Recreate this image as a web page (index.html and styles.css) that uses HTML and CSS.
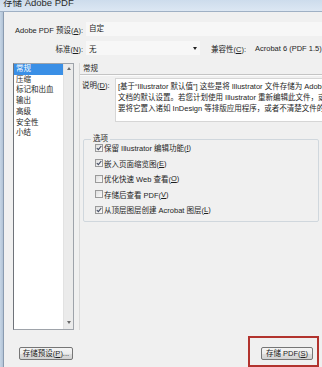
FILE: index.html
```html
<!DOCTYPE html>
<html>

<head>
    <meta charset="UTF-8">
    <title>存储 Adobe PDF</title>
    <link rel="stylesheet" href="styles.css">
</head>

<body>
    <div id="window">
        <div id="titlebar">存储 Adobe PDF</div>
        <div id="frame">
            <div class="frame-edge"></div>
            <div id="dialog">
                <div class="field-row">
                    <span class="field-label">Adobe PDF 预设(<u>A</u>):</span>
                    <span class="field-value">自定</span>
                </div>
                <div class="field-row second">
                    <span class="field-label">标准(<u>N</u>):</span>
                    <span class="combo">无<span class="arrow"></span></span>
                    <span class="compat-label">兼容性(<u>C</u>):</span>
                    <span class="compat-value">Acrobat 6 (PDF 1.5)</span>
                </div>

                <div id="main">
                    <div id="sections">
                        <ul id="sectionList">
                            <li class="selected">常规</li>
                            <li>压缩</li>
                            <li>标记和出血</li>
                            <li>输出</li>
                            <li>高级</li>
                            <li>安全性</li>
                            <li>小结</li>
                        </ul>
                        <div class="scrollbar">
                            <span class="scroll-up"></span>
                            <span class="scroll-down"></span>
                        </div>
                    </div>

                    <div id="panel">
                        <div class="panel-title">常规</div>
                        <div class="desc-row">
                            <span class="desc-label">说明(<u>D</u>):</span>
                            <div class="desc-box">
                                <div>[基于“Illustrator 默认值”] 这些是将 Illustrator 文件存储为 Adobe PDF</div>
                                <div>文档的默认设置。若您计划使用 Illustrator 重新编辑此文件，或者需</div>
                                <div>要将它置入诸如 InDesign 等排版应用程序，或者不清楚文件的最终用途</div>
                            </div>
                        </div>
                        <fieldset id="options">
                            <legend>选项</legend>
                            <div class="check-list">
                                <div class="check"><span class="box"><svg width="6" height="6" viewBox="0 0 6 6"><path d="M0.8 3.1 L2.4 4.7 L5.3 1" /></svg></span>保留 Illustrator 编辑功能(<u>I</u>)</div>
                                <div class="check"><span class="box"><svg width="6" height="6" viewBox="0 0 6 6"><path d="M0.8 3.1 L2.4 4.7 L5.3 1" /></svg></span>嵌入页面缩览图(<u>E</u>)</div>
                                <div class="check"><span class="box"></span>优化快速 Web 查看(<u>O</u>)</div>
                                <div class="check"><span class="box"></span>存储后查看 PDF(<u>V</u>)</div>
                                <div class="check"><span class="box"><svg width="6" height="6" viewBox="0 0 6 6"><path d="M0.8 3.1 L2.4 4.7 L5.3 1" /></svg></span>从顶层图层创建 Acrobat 图层(<u>L</u>)</div>
                            </div>
                        </fieldset>
                    </div>
                </div>

                <div id="footer">
                    <button class="win-btn preset-btn">存储预设(<u>P</u>)...</button>
                    <div class="highlight">
                        <button class="win-btn save-btn">存储 PDF(<u>S</u>)</button>
                    </div>
                </div>
            </div>
        </div>
    </div>
</body>

</html>
```

FILE: styles.css
```css
* {
    box-sizing: border-box;
}

body,
html {
    margin: 0;
    padding: 0;
    background-color: #f0f0f0;
    font-family: "Liberation Sans", "Noto Sans CJK SC", sans-serif;
    font-size: 7.5px;
    color: #1e1e1e;
}

u {
    text-decoration: underline;
    text-underline-offset: 1px;
}

#window {
    width: 322px;
    height: 367px;
    overflow: hidden;
    display: flex;
    flex-direction: column;
}

#titlebar {
    height: 12px;
    line-height: 6px;
    padding: 0 3px;
    font-size: 9.5px;
    color: #2b2b2b;
    background: linear-gradient(#cddcec, #dce7f3);
    border-bottom: 1px solid #9fb0c4;
}

#frame {
    flex: 1;
    display: flex;
    min-width: 0;
}

.frame-edge {
    width: 4px;
    flex: none;
    background: linear-gradient(90deg, #c6d5e5, #b2c3d6);
    border-right: 1px solid #8a9bb0;
}

#dialog {
    flex: 1;
    min-width: 0;
    display: flex;
    flex-direction: column;
    padding-top: 10px;
    background-color: #f0f0f0;
}

.field-row {
    display: flex;
    align-items: center;
    height: 14px;
    min-width: 0;
    overflow: hidden;
}

.field-row.second {
    margin-top: 5px;
}

.field-label {
    width: 79px;
    flex: none;
    text-align: right;
}

.field-value {
    flex: 1;
    height: 14px;
    line-height: 14px;
    margin-left: 3px;
    padding-left: 3px;
    background-color: #f7f7f7;
}

.combo {
    width: 114px;
    flex: none;
    height: 14px;
    margin-left: 3px;
    padding: 0 3px 0 3px;
    display: flex;
    align-items: center;
    justify-content: space-between;
    background-color: #f7f7f7;
}

.arrow {
    width: 0;
    height: 0;
    border-left: 2.5px solid transparent;
    border-right: 2.5px solid transparent;
    border-top: 3px solid #222;
}

.compat-label {
    flex: none;
    margin-left: 11px;
}

.compat-value {
    margin-left: 9px;
    white-space: nowrap;
}

#main {
    display: flex;
    height: 267px;
    margin-top: 8px;
    min-width: 0;
}

#sections {
    width: 61px;
    flex: none;
    margin-left: 9px;
    display: flex;
    background-color: white;
    border: 1px solid #9ea3aa;
    border-left-color: #6f737a;
}

#sectionList {
    flex: 1;
    list-style: none;
    margin: 0;
    padding: 0;
}

#sectionList li {
    line-height: 10.7px;
    padding-left: 2px;
}

#sectionList li.selected {
    background-color: #3a8fe6;
    color: white;
}

.scrollbar {
    width: 10px;
    display: flex;
    flex-direction: column;
    justify-content: space-between;
    align-items: center;
    padding: 3px 0 5px;
    background-color: #ebebeb;
    border-left: 1px solid #e2e2e2;
}

.scroll-up,
.scroll-down {
    width: 0;
    height: 0;
    border-left: 2.5px solid transparent;
    border-right: 2.5px solid transparent;
}

.scroll-up {
    border-bottom: 3px solid #6a6a6a;
}

.scroll-down {
    border-top: 3px solid #6a6a6a;
}

#panel {
    flex: 1;
    min-width: 0;
    margin-left: 5px;
    padding-left: 2px;
    border-left: 1px solid #dadada;
}

.panel-title {
    height: 12px;
    line-height: 12px;
    margin-left: -2px;
    padding-left: 3px;
    border-bottom: 1px solid #c4c4c4;
    box-shadow: 0 1px 0 #fbfbfb;
}

.desc-row {
    display: flex;
    margin-top: 3px;
    min-width: 0;
}

.desc-label {
    width: 33px;
    flex: none;
    line-height: 11px;
    padding-top: 2px;
}

.desc-box {
    flex: 1;
    min-width: 0;
    height: 44px;
    padding: 2px 0 0 2px;
    overflow: hidden;
    background-color: white;
    border: 1px solid #d6d6d6;
    border-right: none;
}

.desc-box div {
    line-height: 11px;
    white-space: nowrap;
}

#options {
    min-width: 0;
    margin: 11px 3px 0 1px;
    padding: 0 0 3px 11px;
    border: 1px solid #d0d7dd;
    border-radius: 2px;
}

#options legend {
    margin-left: -4px;
    padding: 0 2px;
    line-height: 12px;
}

.check-list {
    margin-top: -5px;
}

.check {
    display: flex;
    align-items: center;
    height: 15.5px;
    white-space: nowrap;
}

.box {
    width: 8px;
    height: 8px;
    flex: none;
    margin-right: 1px;
    display: flex;
    align-items: center;
    justify-content: center;
    border: 1px solid #9a9a9a;
    background: linear-gradient(135deg, #dedede, #fbfbfb);
}

.box path {
    fill: none;
    stroke: #4a5268;
    stroke-width: 1.2;
}

#footer {
    display: flex;
    justify-content: space-between;
    align-items: flex-start;
    margin-top: 6px;
}

.win-btn {
    height: 13px;
    padding: 0;
    font-family: inherit;
    font-size: 7.5px;
    line-height: 11px;
    color: #222;
    border: 1px solid #767676;
    border-radius: 2px;
    background: linear-gradient(#f4f4f4 0%, #ececec 50%, #dedede 51%, #d2d2d2 100%);
}

.preset-btn {
    width: 54px;
    margin: 11px 0 0 15px;
}

.highlight {
    width: 71px;
    height: 31px;
    margin-right: 3px;
    padding: 9px 4px 0 11px;
    border: 2px solid #b2332e;
}

.save-btn {
    width: 52px;
}
```
